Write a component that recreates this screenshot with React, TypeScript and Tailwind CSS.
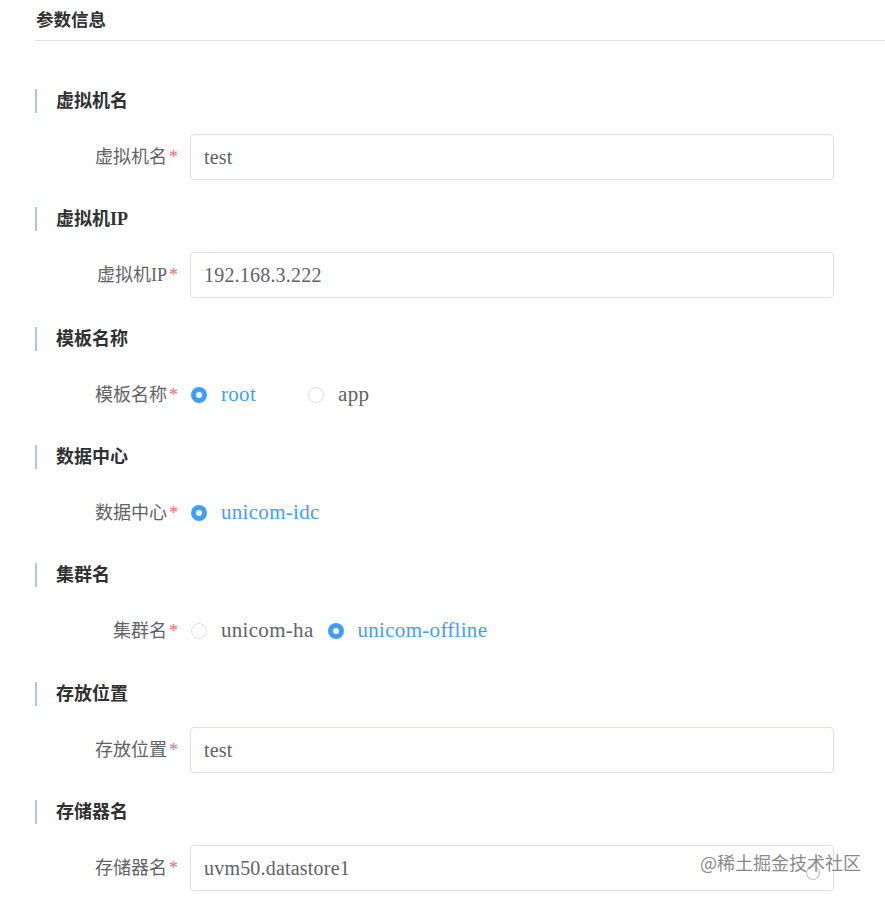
import React from 'react';

type Field =
    | { kind: 'input'; value: string; clear?: boolean }
    | { kind: 'radio'; options: { label: string; checked: boolean; gap: string }[] };

interface Section {
    title: string;
    label: string;
    space: string;
    field: Field;
}

const SECTIONS: Section[] = [
    { title: '虚拟机名', label: '虚拟机名', space: 'mt-0', field: { kind: 'input', value: 'test' } },
    { title: '虚拟机IP', label: '虚拟机IP', space: 'mt-[27px]', field: { kind: 'input', value: '192.168.3.222' } },
    {
        title: '模板名称',
        label: '模板名称',
        space: 'mt-[29px]',
        field: {
            kind: 'radio',
            options: [
                { label: 'root', checked: true, gap: 'mr-[52px]' },
                { label: 'app', checked: false, gap: 'mr-0' },
            ],
        },
    },
    {
        title: '数据中心',
        label: '数据中心',
        space: 'mt-[27px]',
        field: { kind: 'radio', options: [{ label: 'unicom-idc', checked: true, gap: 'mr-0' }] },
    },
    {
        title: '集群名',
        label: '集群名',
        space: 'mt-[27px]',
        field: {
            kind: 'radio',
            options: [
                { label: 'unicom-ha', checked: false, gap: 'mr-[14px]' },
                { label: 'unicom-offline', checked: true, gap: 'mr-0' },
            ],
        },
    },
    { title: '存放位置', label: '存放位置', space: 'mt-[28px]', field: { kind: 'input', value: 'test' } },
    { title: '存储器名', label: '存储器名', space: 'mt-[27px]', field: { kind: 'input', value: 'uvm50.datastore1', clear: true } },
];

const FONT = "font-['Liberation_Serif','Noto_Sans_CJK_SC',serif]";

function RadioDot({ checked }: { checked: boolean }) {
    if (checked) {
        return (
            <span className="w-4 h-4 rounded-full bg-[#409eff] flex items-center justify-center shrink-0">
                <span className="w-[6px] h-[6px] rounded-full bg-white" />
            </span>
        );
    }
    return <span className="w-4 h-4 rounded-full border border-[#dcdfe6] bg-white shrink-0" />;
}

function FieldControl({ field }: { field: Field }) {
    if (field.kind === 'input') {
        return (
            <div className="relative w-[644px] h-[46px] border border-[#dcdfe6] rounded-[4px] bg-white flex items-center pl-[13px]">
                <span className="text-[20px] text-[#606266] tracking-[0.2px]">{field.value}</span>
                {field.clear && (
                    <svg className="absolute left-[614px] top-[19px]" width="16" height="16" viewBox="0 0 16 16">
                        <circle cx="8" cy="8" r="6.5" fill="none" stroke="#c0c4cc" strokeWidth="1.2" />
                    </svg>
                )}
            </div>
        );
    }
    return (
        <div className="flex items-center pl-[1px]">
            {field.options.map((opt) => (
                <label key={opt.label} className={`flex items-center gap-[14px] ${opt.gap}`}>
                    <RadioDot checked={opt.checked} />
                    <span
                        className={`text-[21px] tracking-[0.3px] ${opt.checked ? 'text-[#409eff]' : 'text-[#606266]'}`}
                    >
                        {opt.label}
                    </span>
                </label>
            ))}
        </div>
    );
}

export default function App() {
    return (
        <div className={`relative w-[885px] h-[897px] bg-white overflow-hidden ${FONT}`}>
            <div className="pl-[35px]">
                <div className="pt-[8px] pb-[8px] border-b border-[#dcdfe6]">
                    <h2 className="pl-[1px] h-[24px] leading-[24px] text-[17.5px] font-bold text-[#303133]">参数信息</h2>
                </div>

                <div className="pt-[48px]">
                    {SECTIONS.map((s) => (
                        <div key={s.title} className={s.space}>
                            <div className="h-[24px] border-l-2 border-[#a3c8f2] pl-[19px] flex items-center">
                                <span className="text-[18px] font-bold text-[#303133]">{s.title}</span>
                            </div>
                            <div className="mt-[21px] h-[46px] flex items-center">
                                <div className="w-[155px] pr-[12px] text-right text-[18px] text-[#606266] whitespace-nowrap">
                                    {s.label}
                                    <span className="text-[#f56c6c] ml-[2px]">*</span>
                                </div>
                                <FieldControl field={s.field} />
                            </div>
                        </div>
                    ))}
                </div>
            </div>

            <div className="absolute left-[700px] top-[849px] text-[18px] text-[#8a8a8a] font-['Noto_Sans_CJK_SC',sans-serif] [text-shadow:0_0_2px_#fff]">
                @稀土掘金技术社区
            </div>
        </div>
    );
}
